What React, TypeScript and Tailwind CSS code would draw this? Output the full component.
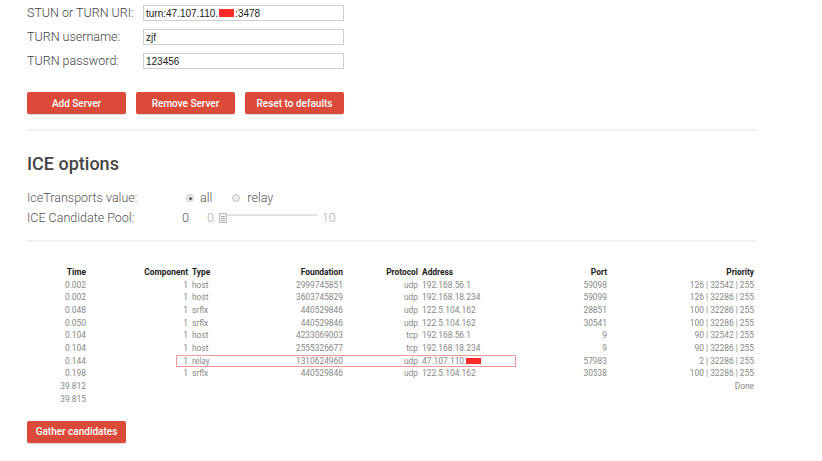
import React from "react";

// ICE candidate gathering page: TURN server form, ICE options and the candidates table.
const rows = [
  { time: "0.002", comp: "1", type: "host", found: "2999745851", proto: "udp", addr: "192.168.56.1", port: "59098", prio: "126 | 32542 | 255" },
  { time: "0.002", comp: "1", type: "host", found: "3603745829", proto: "udp", addr: "192.168.18.234", port: "59099", prio: "126 | 32286 | 255" },
  { time: "0.048", comp: "1", type: "srflx", found: "440529846", proto: "udp", addr: "122.5.104.162", port: "28851", prio: "100 | 32286 | 255" },
  { time: "0.050", comp: "1", type: "srflx", found: "440529846", proto: "udp", addr: "122.5.104.162", port: "30541", prio: "100 | 32286 | 255" },
  { time: "0.104", comp: "1", type: "host", found: "4233069003", proto: "tcp", addr: "192.168.56.1", port: "9", prio: "90 | 32542 | 255" },
  { time: "0.104", comp: "1", type: "host", found: "2555326677", proto: "tcp", addr: "192.168.18.234", port: "9", prio: "90 | 32286 | 255" },
  { time: "0.144", comp: "1", type: "relay", found: "1310624960", proto: "udp", addr: "47.107.110.", port: "57983", prio: "2 | 32286 | 255", hidden: true },
  { time: "0.198", comp: "1", type: "srflx", found: "440529846", proto: "udp", addr: "122.5.104.162", port: "30538", prio: "100 | 32286 | 255" },
  { time: "39.812", comp: "", type: "", found: "", proto: "", addr: "", port: "", prio: "Done" },
  { time: "39.815", comp: "", type: "", found: "", proto: "", addr: "", port: "", prio: "" },
];

const cols = "grid grid-cols-[59px_103px_61px_93px_76px_101px_88px_147px]";

function Field({ label, children }: { label: string; children: React.ReactNode }) {
  return (
    <div className="flex h-6 items-center">
      <label className="w-[116px] text-[12.5px] font-light text-[#444]">{label}</label>
      <div className="flex h-4 w-[201px] items-center border border-[#cfcfcf] pl-[2px] font-['Liberation_Sans',Arial,sans-serif] text-[10px] text-[#222]">
        {children}
      </div>
    </div>
  );
}

function RedButton({ children }: { children: React.ReactNode }) {
  return (
    <button className="h-[22px] w-[99px] rounded-[2px] bg-[#dc4a3a] text-[10px] font-medium text-white shadow-[0_1px_1px_rgba(0,0,0,0.15)]">
      {children}
    </button>
  );
}

function Radio({ checked }: { checked?: boolean }) {
  return (
    <span className="flex h-2 w-2 items-center justify-center rounded-full border border-[#c8c8c8] bg-[#eee]">
      {checked && <span className="h-[3px] w-[3px] rounded-full bg-[#555]" />}
    </span>
  );
}

export default function App() {
  return (
    <div className="min-h-[461px] w-[822px] bg-white pl-[27px] pt-px font-['Roboto',sans-serif] text-[#444]">
      <div className="w-[729px]">
        {/* TURN server form */}
        <Field label="STUN or TURN URI:">
          turn:47.107.110.<span className="mx-px inline-block h-2 w-[15px] bg-[#ff2b2b]" />:3478
        </Field>
        <Field label="TURN username:">zjf</Field>
        <Field label="TURN password:">123456</Field>

        <div className="mt-[19px] flex gap-[10px]">
          <RedButton>Add Server</RedButton>
          <RedButton>Remove Server</RedButton>
          <RedButton>Reset to defaults</RedButton>
        </div>

        <div className="mt-[15px] h-[2px] bg-[#f1f1f1]" />

        {/* ICE options */}
        <h2 className="mt-[21px] text-[18px] font-medium leading-6 text-[#444]">ICE options</h2>
        <div className="mt-[12px] flex h-5 items-center text-[12.5px] font-light text-[#555]">
          <span className="w-[159px]">IceTransports value:</span>
          <Radio checked />
          <span className="ml-[6px]">all</span>
          <span className="ml-[20px]">
            <Radio />
          </span>
          <span className="ml-[7px]">relay</span>
        </div>
        <div className="flex h-5 items-center text-[12.5px] font-light text-[#555]">
          <span className="w-[155px]">ICE Candidate Pool:</span>
          <span>0</span>
          <span className="ml-[18px] text-[#aaa]">0</span>
          <span className="ml-[5px] flex h-[10px] w-[8px] flex-col items-center justify-center gap-px border border-[#bbb] bg-[#f4f4f4]">
            <span className="h-px w-[4px] bg-[#aaa]" />
            <span className="h-px w-[4px] bg-[#aaa]" />
            <span className="h-px w-[4px] bg-[#aaa]" />
          </span>
          <span className="mb-[7px] h-[2px] w-[90px] bg-[#e3e3e3]" />
          <span className="ml-[5px] text-[#aaa]">10</span>
        </div>

        <div className="mt-[12px] h-[2px] bg-[#f1f1f1]" />

        {/* candidates table */}
        <div className="mt-[24px] text-[8.4px] leading-[12.67px]">
          <div className={`${cols} font-bold text-[#222]`}>
            <div className="text-right">Time</div>
            <div className="pr-px text-right">Component</div>
            <div className="pl-[3px]">Type</div>
            <div className="text-right">Foundation</div>
            <div className="pr-px text-right">Protocol</div>
            <div className="pl-[3px]">Address</div>
            <div className="pr-px text-right">Port</div>
            <div className="pr-px text-right">Priority</div>
          </div>
          {rows.map((r, i) => (
            <div key={i} className={`${cols} relative h-[12.67px] text-[#888]`}>
              <div className="text-right">{r.time}</div>
              <div className="pr-px text-right">{r.comp}</div>
              <div className="pl-[3px]">{r.type}</div>
              <div className="text-right">{r.found}</div>
              <div className="pr-px text-right">{r.proto}</div>
              <div className="flex items-center pl-[3px]">
                {r.addr}
                {r.hidden && <span className="h-[6px] w-[15px] bg-[#ff2b2b]" />}
              </div>
              <div className="pr-px text-right">{r.port}</div>
              <div className="pr-px text-right">{r.prio}</div>
              {r.hidden && (
                <div className="absolute left-[149px] top-0 h-[12.5px] w-[340px] border border-[#f29a9a]" />
              )}
            </div>
          ))}
        </div>

        <div className="mt-[13px]">
          <RedButton>Gather candidates</RedButton>
        </div>
      </div>
    </div>
  );
}
